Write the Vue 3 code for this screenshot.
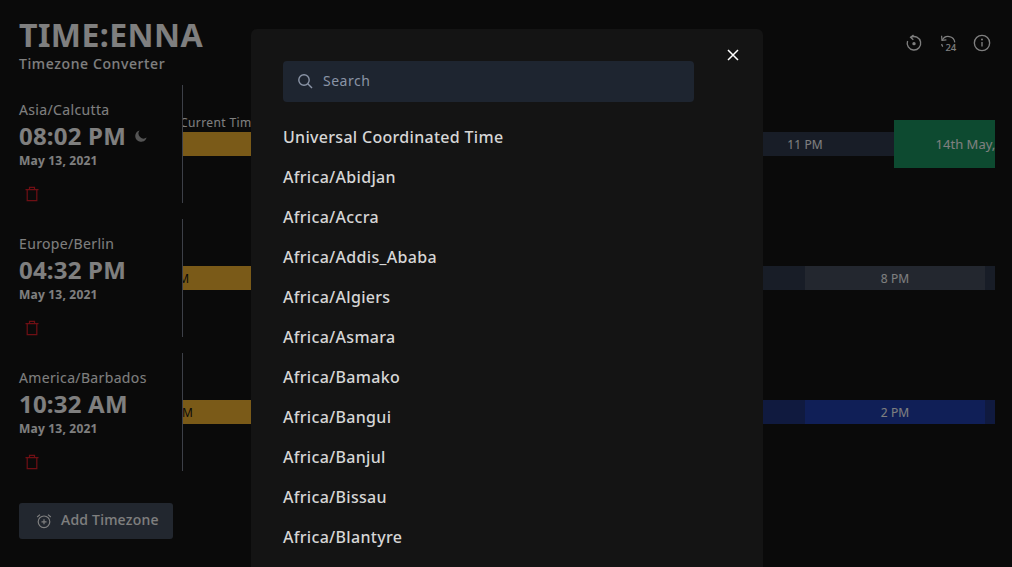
<template>
  <div class="page">
    <header class="top">
      <div class="brand">
        <h1>TIME:ENNA</h1>
        <p>Timezone Converter</p>
      </div>
      <div class="actions">
        <svg viewBox="0 0 16 16" class="act"><path d="M5.2 2.9A6 6 0 1 1 2.3 6.2" /><path d="M7.6 1 5 3l2.4 2.2" /><circle cx="8" cy="8.6" r="1.5" class="solid" /></svg>
        <svg viewBox="0 0 18 18" class="act"><path d="M3.2 6.4A6.6 6.6 0 0 1 15.8 8.4" /><path d="M2.6 1.8l.4 4.6 4.4-.6" /><path d="M2.6 10c.2.8.6 1.8 1.2 2.6" /><text x="6.4" y="17.4">24</text></svg>
        <svg viewBox="0 0 16 16" class="act"><circle cx="8" cy="8" r="6.8" /><path d="M8 7.2v4" /><circle cx="8" cy="4.9" r=".9" class="solid" /></svg>
      </div>
    </header>

    <section class="rows">
      <div v-for="row in rows" :key="row.zone" class="row">
        <div class="info">
          <div class="zone">{{ row.zone }}</div>
          <div class="time">
            {{ row.time }}
            <svg v-if="row.night" viewBox="0 0 16 16" class="moon"><path d="M6.4 1.6a6.6 6.6 0 1 0 8 8.2A5.8 5.8 0 0 1 6.4 1.6z" /></svg>
          </div>
          <div class="date">May 13, 2021</div>
          <button class="trash">
            <svg viewBox="0 0 16 16"><path d="M1.5 3.6h13M3.2 3.6v11h9.6v-11M5.5 3.6V1.4h5v2.2" /></svg>
          </button>
        </div>
        <div class="timeline">
          <span v-if="row.night" class="now">Current Time</span>
          <div class="track" :style="{ marginLeft: row.offset + 'px' }">
            <div v-for="cell in row.cells" :key="cell.label" class="cell" :class="cell.kind">{{ cell.label }}</div>
          </div>
        </div>
      </div>
    </section>

    <button class="add">
      <svg viewBox="0 0 16 16"><circle cx="8" cy="8.8" r="5.8" /><path d="M8 6.3v5M5.5 8.8h5M1.2 4 4 1.6M14.8 4 12 1.6" /></svg>
      Add Timezone
    </button>

    <div class="overlay">
      <div class="modal">
        <button class="close">
          <svg viewBox="0 0 12 12"><path d="M1 1l10 10M11 1 1 11" /></svg>
        </button>
        <label class="search">
          <svg viewBox="0 0 16 16"><circle cx="7" cy="7" r="5.2" /><path d="M10.8 10.8 15 15" /></svg>
          <input type="text" placeholder="Search" />
        </label>
        <ul class="list">
          <li v-for="name in zones" :key="name">{{ name }}</li>
        </ul>
      </div>
    </div>
  </div>
</template>

<script setup>
const rows = [
  {
    zone: 'Asia/Calcutta',
    time: '08:02 PM',
    night: true,
    offset: -8,
    cells: [
      { label: '8 PM', kind: 'amber' },
      { label: '9 PM', kind: 'slate' },
      { label: '10 PM', kind: 'slate' },
      { label: '11 PM', kind: 'slate' },
      { label: '14th May, 2021', kind: 'green' }
    ]
  },
  {
    zone: 'Europe/Berlin',
    time: '04:32 PM',
    night: false,
    offset: -98,
    cells: [
      { label: '4 PM', kind: 'amber' },
      { label: '5 PM', kind: 'slate' },
      { label: '6 PM', kind: 'slate' },
      { label: '7 PM', kind: 'slate' },
      { label: '8 PM', kind: 'grey' },
      { label: '9 PM', kind: 'slate' }
    ]
  },
  {
    zone: 'America/Barbados',
    time: '10:32 AM',
    night: false,
    offset: -98,
    cells: [
      { label: '10 AM', kind: 'amber' },
      { label: '11 AM', kind: 'navy' },
      { label: '12 PM', kind: 'navy' },
      { label: '1 PM', kind: 'navy' },
      { label: '2 PM', kind: 'blue' },
      { label: '3 PM', kind: 'navy' }
    ]
  }
]

const zones = [
  'Universal Coordinated Time',
  'Africa/Abidjan',
  'Africa/Accra',
  'Africa/Addis_Ababa',
  'Africa/Algiers',
  'Africa/Asmara',
  'Africa/Bamako',
  'Africa/Bangui',
  'Africa/Banjul',
  'Africa/Bissau',
  'Africa/Blantyre',
  'Africa/Brazzaville'
]
</script>

<style>
html,
body {
  margin: 0;
  background: #141414;
}
</style>

<style scoped>
.page {
  position: relative;
  width: 1012px;
  height: 567px;
  box-sizing: border-box;
  padding: 16px 17px 0 19px;
  overflow: hidden;
  background: #141414;
  color: #fff;
  font-family: "Noto Sans", sans-serif;
}

.top {
  display: flex;
  justify-content: space-between;
  align-items: center;
  height: 57px;
}

.brand h1 {
  margin: 0;
  font-size: 32px;
  line-height: 38px;
  font-weight: 700;
  letter-spacing: 0.45px;
}

.brand p {
  margin: 0;
  font-size: 14px;
  line-height: 19px;
  font-weight: 500;
  letter-spacing: 0.6px;
}

.actions {
  display: flex;
  gap: 16px;
  margin: -3px 4px 0 0;
  align-items: center;
}

.act {
  width: 18px;
  height: 18px;
  fill: none;
  stroke: #fff;
  stroke-width: 1.2;
}

.act .solid {
  fill: #fff;
  stroke: none;
}

.act text {
  fill: #fff;
  stroke: none;
  font-size: 9.5px;
  font-weight: 500;
}

.rows {
  display: flex;
  flex-direction: column;
  gap: 16px;
  margin-top: 12px;
}

.row {
  display: flex;
  height: 118px;
}

.info {
  width: 163px;
  flex: none;
  padding-top: 15px;
  box-sizing: border-box;
}

.zone {
  font-size: 14px;
  line-height: 19px;
  letter-spacing: 0.35px;
}

.time {
  display: flex;
  align-items: center;
  gap: 8px;
  font-size: 24px;
  line-height: 33px;
  font-weight: 700;
  letter-spacing: 0.2px;
}

.moon {
  width: 14px;
  height: 14px;
  fill: #a8a8a8;
}

.date {
  font-size: 12px;
  line-height: 16px;
  margin-top: 1px;
  font-weight: 700;
  letter-spacing: 0.2px;
}

.trash {
  display: block;
  width: 26px;
  height: 26px;
  padding: 5px;
  margin-top: 12px;
  background: none;
  border: 0;
}

.trash svg {
  display: block;
  width: 16px;
  height: 16px;
  fill: none;
  stroke: #dc1e28;
  stroke-width: 1.2;
}

.timeline {
  position: relative;
  flex: 1;
  display: flex;
  align-items: center;
  overflow: hidden;
  border-left: 1px solid #7a8090;
}

.now {
  position: absolute;
  left: -3px;
  top: 30px;
  font-size: 12px;
  line-height: 16px;
  white-space: nowrap;
  letter-spacing: 0.4px;
}

.track {
  display: flex;
  align-items: center;
  flex: none;
}

.cell {
  width: 180px;
  height: 24px;
  flex: none;
  display: flex;
  align-items: center;
  justify-content: center;
  font-size: 12px;
  white-space: nowrap;
  letter-spacing: 0.1px;
}

.amber {
  background: #f4b430;
  color: #141414;
}

.slate {
  background: #303a4e;
}

.grey {
  background: #464e5e;
}

.navy {
  background: #20347e;
}

.blue {
  background: #203eae;
}

.green {
  width: 181px;
  height: 48px;
  margin-left: -1px;
  padding-right: 5px;
  box-sizing: border-box;
  background: #1a9460;
  font-size: 13px;
  letter-spacing: 0;
}

.add {
  display: flex;
  align-items: center;
  gap: 9px;
  box-sizing: border-box;
  width: 154px;
  height: 36px;
  margin-top: 32px;
  padding: 0 0 3px 17px;
  border: 0;
  border-radius: 3px;
  background: #444e5e;
  color: #fff;
  font: 500 14px "Noto Sans", sans-serif;
  letter-spacing: 0.22px;
}

.add svg {
  width: 16px;
  height: 16px;
  margin-top: 3px;
  fill: none;
  stroke: #fff;
  stroke-width: 1.2;
}

.overlay {
  position: absolute;
  inset: 0;
  display: flex;
  justify-content: center;
  background: rgba(0, 0, 0, 0.5);
}

.modal {
  position: relative;
  width: 512px;
  height: 700px;
  margin-top: 29px;
  padding: 32px;
  box-sizing: border-box;
  border-radius: 6px;
  background: #141414;
  flex: none;
  transform: translateX(1px);
}

.close {
  position: absolute;
  top: 20px;
  right: 24px;
  width: 12px;
  height: 12px;
  padding: 0;
  background: none;
  border: 0;
}

.close svg {
  display: block;
  width: 12px;
  height: 12px;
  fill: none;
  stroke: #fff;
  stroke-width: 1.5;
}

.search {
  display: flex;
  align-items: center;
  gap: 10px;
  box-sizing: border-box;
  width: 411px;
  height: 41px;
  padding: 0 0 2px 14px;
  border-radius: 4px;
  background: #1e2530;
}

.search svg {
  width: 16px;
  height: 16px;
  fill: none;
  stroke: #8a94a6;
  stroke-width: 1.4;
}

.search input {
  flex: 1;
  min-width: 0;
  background: none;
  border: 0;
  outline: 0;
  padding: 0;
  color: #fff;
  font: 400 14px "Noto Sans", sans-serif;
  letter-spacing: 0.5px;
}

.search input::placeholder {
  color: #8a94a6;
  opacity: 1;
}

.list {
  list-style: none;
  margin: 15px 0 0;
  padding: 0;
}

.list li {
  height: 40px;
  line-height: 40px;
  font-size: 16px;
  font-weight: 500;
  letter-spacing: 0.3px;
  color: #d6d6d6;
}
</style>
